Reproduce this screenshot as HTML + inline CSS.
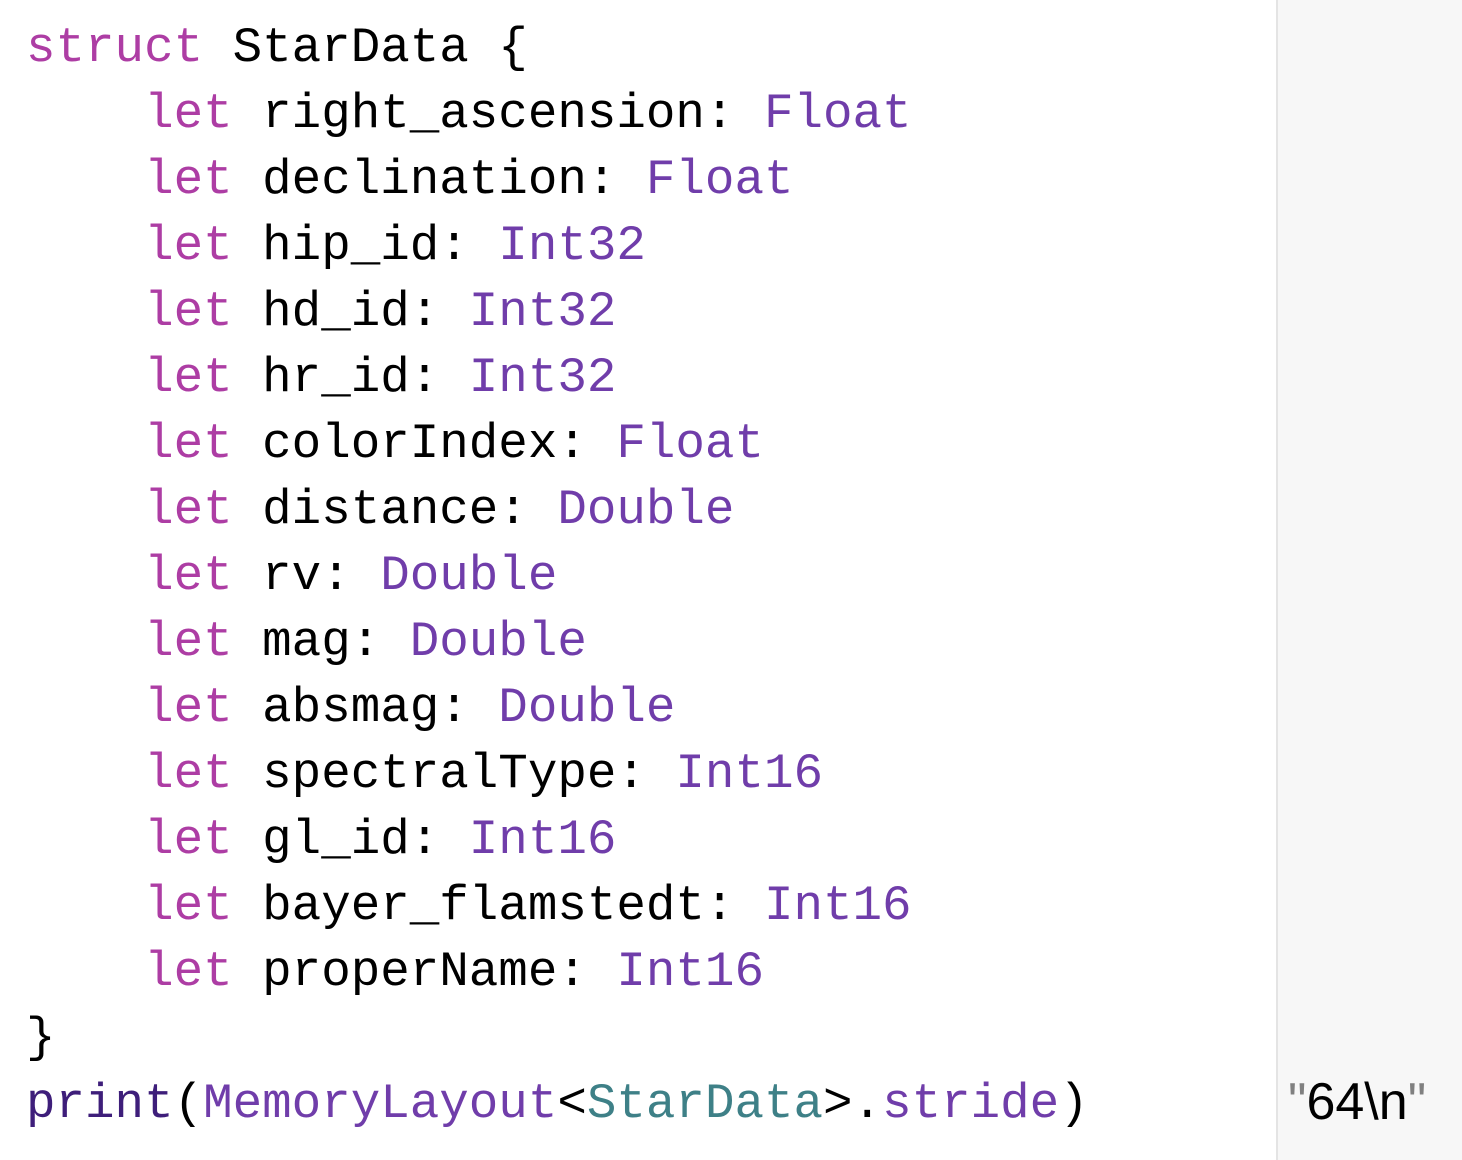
<!DOCTYPE html>
<html><head><style>
html,body{margin:0;padding:0;background:#fff;width:1462px;height:1160px;overflow:hidden;position:relative}
pre{position:absolute;left:26px;top:15px;margin:0;font-family:"Liberation Mono",monospace;font-size:49.2px;line-height:66px;color:#000}
.k{color:#ad3da4}.t{color:#703daa}.f{color:#3e1e7a}.s{color:#3e8087}
.panel{position:absolute;left:1276px;top:0;width:186px;height:1160px;background:#f7f7f7;border-left:2px solid #e4e4e4}
.res{position:absolute;left:1288px;top:1072px;font-family:"Liberation Sans",sans-serif;font-size:52px;color:#000}
.q{color:#808080}
</style></head><body>
<div class="panel"></div>
<pre><span class="k">struct</span> StarData {
    <span class="k">let</span> right_ascension: <span class="t">Float</span>
    <span class="k">let</span> declination: <span class="t">Float</span>
    <span class="k">let</span> hip_id: <span class="t">Int32</span>
    <span class="k">let</span> hd_id: <span class="t">Int32</span>
    <span class="k">let</span> hr_id: <span class="t">Int32</span>
    <span class="k">let</span> colorIndex: <span class="t">Float</span>
    <span class="k">let</span> distance: <span class="t">Double</span>
    <span class="k">let</span> rv: <span class="t">Double</span>
    <span class="k">let</span> mag: <span class="t">Double</span>
    <span class="k">let</span> absmag: <span class="t">Double</span>
    <span class="k">let</span> spectralType: <span class="t">Int16</span>
    <span class="k">let</span> gl_id: <span class="t">Int16</span>
    <span class="k">let</span> bayer_flamstedt: <span class="t">Int16</span>
    <span class="k">let</span> properName: <span class="t">Int16</span>
}
<span class="f">print</span>(<span class="t">MemoryLayout</span>&lt;<span class="s">StarData</span>&gt;.<span class="t">stride</span>)</pre>
<div class="res"><span class="q">"</span>64\n<span class="q">"</span></div>
</body></html>
